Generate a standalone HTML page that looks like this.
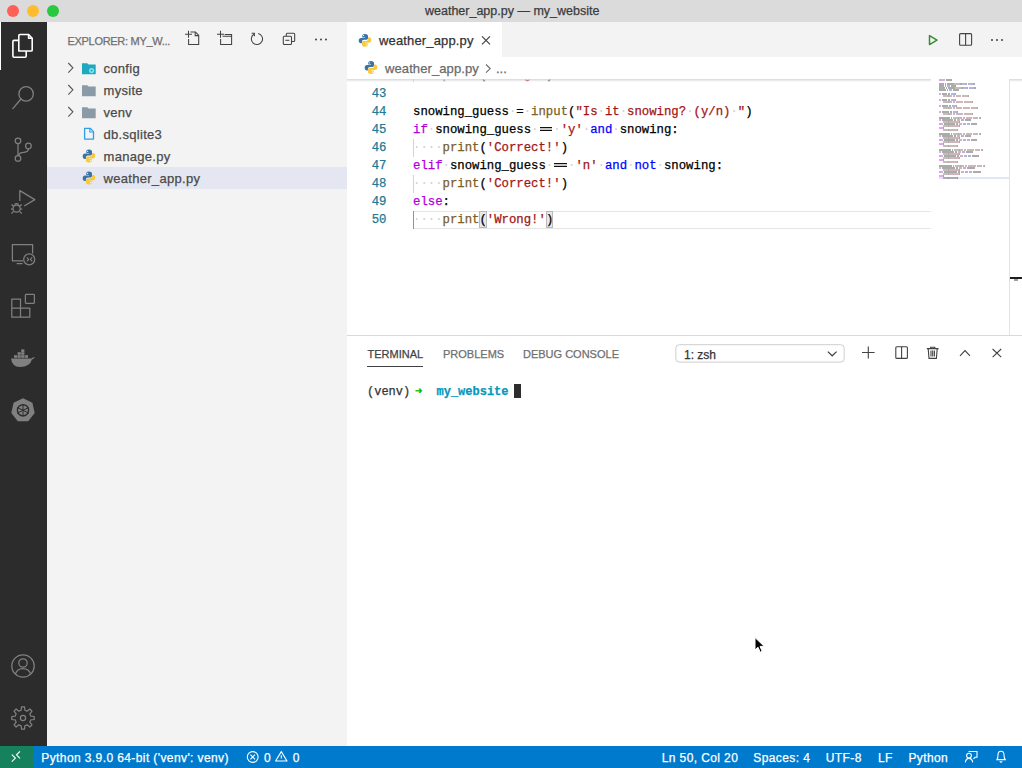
<!DOCTYPE html><html><head><meta charset="utf-8"><style>
*{margin:0;padding:0;box-sizing:border-box}
html,body{width:1022px;height:768px;overflow:hidden;background:#fff;font-family:"Liberation Sans",sans-serif}
.t,.tree,.sb,.code,.ln{-webkit-text-stroke:0.25px currentColor}
.a{position:absolute}
.t{position:absolute;white-space:pre;line-height:1}
.dot{position:absolute;top:5px;width:12px;height:12px;border-radius:50%}
.code{position:absolute;left:413px;font-family:"Liberation Mono",monospace;font-size:12.3px;line-height:18px;height:18px;white-space:pre;color:#000}
.ln{position:absolute;left:347px;width:39.5px;text-align:right;font-family:"Liberation Mono",monospace;font-size:12.3px;line-height:18px;height:18px;color:#237893}
.kw{color:#af00db}.op{color:#0000ff}.st{color:#a31515}.fn{color:#795e26}.ws{color:#d0d0d0;-webkit-text-stroke:0}
.tree{position:absolute;left:103.5px;font-size:13px;letter-spacing:0.3px;color:#4a4a4a;white-space:pre;line-height:1}
.sb{position:absolute;top:751.5px;font-size:12px;letter-spacing:0.4px;color:#fff;white-space:pre;line-height:1}
.mono{font-family:"Liberation Mono",monospace}
</style></head><body>
<div class="a" style="left:0;top:0;width:1022px;height:22px;background:#dbdbdb"></div>
<div class="dot" style="left:7px;background:#fe5f57"></div>
<div class="dot" style="left:27px;background:#febc2e"></div>
<div class="dot" style="left:47px;background:#28c840"></div>
<div class="t" style="left:425px;top:5px;font-size:12.5px;color:#3b3b3b">weather_app.py — my_website</div>
<div class="a" style="left:0;top:22px;width:47px;height:724px;background:#2c2c2c"></div>
<div class="a" style="left:0;top:22px;width:1px;height:48px;background:#fff"></div>
<div class="a" style="left:47px;top:22px;width:300px;height:724px;background:#f3f3f3"></div>
<div class="t" style="left:67.5px;top:36px;font-size:11px;letter-spacing:-0.3px;color:#6f6f6f">EXPLORER: MY_W...</div>
<div class="a" style="left:47px;top:167px;width:300px;height:22px;background:#e4e6f1"></div>
<div class="tree" style="top:61.5px">config</div>
<div class="tree" style="top:83.5px">mysite</div>
<div class="tree" style="top:105.5px">venv</div>
<div class="tree" style="top:127.5px">db.sqlite3</div>
<div class="tree" style="top:149.5px">manage.py</div>
<div class="tree" style="top:171.5px">weather_app.py</div>
<div class="a" style="left:347px;top:22px;width:675px;height:35px;background:#f3f3f3"></div>
<div class="a" style="left:347px;top:22px;width:155px;height:35px;background:#fff"></div>
<div class="t" style="left:379px;top:34px;font-size:13px;letter-spacing:0.15px;color:#333">weather_app.py</div>
<div class="a" style="left:347px;top:57px;width:675px;height:278px;background:#fff"></div>
<div class="t" style="left:385px;top:61.5px;font-size:13px;letter-spacing:0.1px;color:#6a6a6a">weather_app.py</div>
<div class="t" style="left:496px;top:61.5px;font-size:13px;color:#6a6a6a">...</div>
<div class="a" style="left:413px;top:138.6px;width:1px;height:18px;background:#d3d3d3"></div>
<div class="a" style="left:413px;top:174.6px;width:1px;height:18px;background:#d3d3d3"></div>
<div class="a" style="left:413px;top:211px;width:518px;height:17.6px;border-top:1px solid #e6e6e6;border-bottom:1px solid #e6e6e6"></div>
<div class="a" style="left:413px;top:210.6px;width:1px;height:18px;background:#939393"></div>
<div class="a" style="left:479.2px;top:210.8px;width:7.4px;height:17.6px;background:#e8e8e8;border:1px solid #b9b9b9"></div>
<div class="a" style="left:545.6px;top:210.8px;width:7.4px;height:17.6px;background:#e8e8e8;border:1px solid #b9b9b9"></div>
<div class="ln" style="top:84.6px">43</div>
<div class="ln" style="top:102.6px">44</div>
<div class="ln" style="top:120.6px">45</div>
<div class="ln" style="top:138.6px">46</div>
<div class="ln" style="top:156.6px">47</div>
<div class="ln" style="top:174.6px">48</div>
<div class="ln" style="top:192.6px">49</div>
<div class="ln" style="top:210.6px">50</div>
<div class="code" style="top:102.6px">snowing_guess<span class="ws">·</span>=<span class="ws">·</span><span class="fn">input</span>(<span class="st">"Is<span class="ws">·</span>it<span class="ws">·</span>snowing?<span class="ws">·</span>(y/n)<span class="ws">·</span>"</span>)</div>
<div class="code" style="top:120.6px"><span class="kw">if</span><span class="ws">·</span>snowing_guess<span class="ws">·</span><span style="display:inline-block;position:relative;width:14.76px;height:18px;vertical-align:top"><i style="position:absolute;left:1.2px;width:12.8px;top:6.3px;height:4.1px;border-top:1.2px solid #111;border-bottom:1.2px solid #111;background:#c8c8c8"></i></span><span class="ws">·</span><span class="st">'y'</span><span class="ws">·</span><span class="op">and</span><span class="ws">·</span>snowing:</div>
<div class="code" style="top:138.6px"><span class="ws">····</span><span class="fn">print</span>(<span class="st">'Correct!'</span>)</div>
<div class="code" style="top:156.6px"><span class="kw">elif</span><span class="ws">·</span>snowing_guess<span class="ws">·</span><span style="display:inline-block;position:relative;width:14.76px;height:18px;vertical-align:top"><i style="position:absolute;left:1.2px;width:12.8px;top:6.3px;height:4.1px;border-top:1.2px solid #111;border-bottom:1.2px solid #111;background:#c8c8c8"></i></span><span class="ws">·</span><span class="st">'n'</span><span class="ws">·</span><span class="op">and</span><span class="ws">·</span><span class="op">not</span><span class="ws">·</span>snowing:</div>
<div class="code" style="top:174.6px"><span class="ws">····</span><span class="fn">print</span>(<span class="st">'Correct!'</span>)</div>
<div class="code" style="top:192.6px"><span class="kw">else</span>:</div>
<div class="code" style="top:210.6px"><span class="ws">····</span><span class="fn">print</span>(<span class="st">'Wrong!'</span>)</div>
<div class="a" style="left:347px;top:79px;width:662px;height:4px;overflow:hidden"><div class="code" style="left:66px;top:-13.2px"><span class="ws">····</span><span class="fn">print</span>(<span class="st">'Wrong!'</span>)</div><div class="a" style="left:66px;top:0;width:1px;height:3px;background:#d3d3d3"></div></div>
<div class="a" style="left:347px;top:79px;width:584px;height:3px;background:linear-gradient(#d8d8d8,rgba(221,221,221,0))"></div>
<div class="a" style="left:1009px;top:79px;width:13px;height:3px;background:linear-gradient(#d8d8d8,rgba(221,221,221,0))"></div>
<div class="a" style="left:1009px;top:79px;width:1px;height:256px;background:#e3e3e3"></div>
<div class="a" style="left:1010px;top:276.5px;width:12px;height:2px;background:#1e1e1e"></div>
<div class="a" style="left:1014px;top:279px;width:4px;height:2px;background:#a0a0a0"></div>
<svg class="a" style="left:0;top:0" width="1022" height="768" viewBox="0 0 1022 768"><rect x="939" y="177" width="70" height="2" fill="#dde8f4"/><rect x="939" y="79" width="6" height="2" fill="#8a00b0" fill-opacity="0.33"/><rect x="946" y="79" width="6" height="2" fill="#000000" fill-opacity="0.33"/><rect x="939" y="83" width="5" height="2" fill="#000000" fill-opacity="0.33"/><rect x="945" y="83" width="1" height="2" fill="#000000" fill-opacity="0.33"/><rect x="947" y="83" width="6" height="2" fill="#000000" fill-opacity="0.33"/><rect x="953" y="83" width="1" height="2" fill="#000000" fill-opacity="0.33"/><rect x="954" y="83" width="6" height="2" fill="#4a3a20" fill-opacity="0.33"/><rect x="960" y="83" width="2" height="2" fill="#000000" fill-opacity="0.33"/><rect x="962" y="83" width="4" height="2" fill="#1a1aa0" fill-opacity="0.33"/><rect x="966" y="83" width="1" height="2" fill="#000000" fill-opacity="0.33"/><rect x="968" y="83" width="5" height="2" fill="#1a1aa0" fill-opacity="0.33"/><rect x="973" y="83" width="2" height="2" fill="#000000" fill-opacity="0.33"/><rect x="939" y="85" width="5" height="2" fill="#000000" fill-opacity="0.33"/><rect x="945" y="85" width="1" height="2" fill="#000000" fill-opacity="0.33"/><rect x="947" y="85" width="3" height="2" fill="#1a1aa0" fill-opacity="0.33"/><rect x="951" y="85" width="5" height="2" fill="#000000" fill-opacity="0.33"/><rect x="939" y="87" width="6" height="2" fill="#000000" fill-opacity="0.33"/><rect x="946" y="87" width="1" height="2" fill="#000000" fill-opacity="0.33"/><rect x="948" y="87" width="6" height="2" fill="#000000" fill-opacity="0.33"/><rect x="954" y="87" width="1" height="2" fill="#000000" fill-opacity="0.33"/><rect x="955" y="87" width="6" height="2" fill="#4a3a20" fill-opacity="0.33"/><rect x="961" y="87" width="2" height="2" fill="#000000" fill-opacity="0.33"/><rect x="963" y="87" width="4" height="2" fill="#1a1aa0" fill-opacity="0.33"/><rect x="967" y="87" width="1" height="2" fill="#000000" fill-opacity="0.33"/><rect x="969" y="87" width="5" height="2" fill="#1a1aa0" fill-opacity="0.33"/><rect x="974" y="87" width="2" height="2" fill="#000000" fill-opacity="0.33"/><rect x="939" y="89" width="7" height="2" fill="#000000" fill-opacity="0.33"/><rect x="947" y="89" width="1" height="2" fill="#000000" fill-opacity="0.33"/><rect x="949" y="89" width="3" height="2" fill="#1a1aa0" fill-opacity="0.33"/><rect x="953" y="89" width="6" height="2" fill="#000000" fill-opacity="0.33"/><rect x="939" y="93" width="2" height="2" fill="#8a00b0" fill-opacity="0.33"/><rect x="942" y="93" width="5" height="2" fill="#000000" fill-opacity="0.33"/><rect x="948" y="93" width="2" height="2" fill="#000000" fill-opacity="0.33"/><rect x="951" y="93" width="4" height="2" fill="#1a1aa0" fill-opacity="0.33"/><rect x="955" y="93" width="1" height="2" fill="#000000" fill-opacity="0.33"/><rect x="943" y="95" width="5" height="2" fill="#4a3a20" fill-opacity="0.33"/><rect x="948" y="95" width="1" height="2" fill="#000000" fill-opacity="0.33"/><rect x="949" y="95" width="3" height="2" fill="#6a2030" fill-opacity="0.33"/><rect x="953" y="95" width="2" height="2" fill="#6a2030" fill-opacity="0.33"/><rect x="956" y="95" width="5" height="2" fill="#6a2030" fill-opacity="0.33"/><rect x="962" y="95" width="6" height="2" fill="#6a2030" fill-opacity="0.33"/><rect x="968" y="95" width="1" height="2" fill="#000000" fill-opacity="0.33"/><rect x="939" y="99" width="2" height="2" fill="#8a00b0" fill-opacity="0.33"/><rect x="942" y="99" width="5" height="2" fill="#000000" fill-opacity="0.33"/><rect x="948" y="99" width="2" height="2" fill="#000000" fill-opacity="0.33"/><rect x="951" y="99" width="4" height="2" fill="#1a1aa0" fill-opacity="0.33"/><rect x="955" y="99" width="1" height="2" fill="#000000" fill-opacity="0.33"/><rect x="943" y="101" width="5" height="2" fill="#4a3a20" fill-opacity="0.33"/><rect x="948" y="101" width="1" height="2" fill="#000000" fill-opacity="0.33"/><rect x="949" y="101" width="3" height="2" fill="#6a2030" fill-opacity="0.33"/><rect x="953" y="101" width="2" height="2" fill="#6a2030" fill-opacity="0.33"/><rect x="956" y="101" width="7" height="2" fill="#6a2030" fill-opacity="0.33"/><rect x="964" y="101" width="8" height="2" fill="#6a2030" fill-opacity="0.33"/><rect x="972" y="101" width="1" height="2" fill="#000000" fill-opacity="0.33"/><rect x="939" y="105" width="2" height="2" fill="#8a00b0" fill-opacity="0.33"/><rect x="942" y="105" width="6" height="2" fill="#000000" fill-opacity="0.33"/><rect x="949" y="105" width="2" height="2" fill="#000000" fill-opacity="0.33"/><rect x="952" y="105" width="4" height="2" fill="#1a1aa0" fill-opacity="0.33"/><rect x="956" y="105" width="1" height="2" fill="#000000" fill-opacity="0.33"/><rect x="943" y="107" width="5" height="2" fill="#4a3a20" fill-opacity="0.33"/><rect x="948" y="107" width="1" height="2" fill="#000000" fill-opacity="0.33"/><rect x="949" y="107" width="3" height="2" fill="#6a2030" fill-opacity="0.33"/><rect x="953" y="107" width="2" height="2" fill="#6a2030" fill-opacity="0.33"/><rect x="956" y="107" width="6" height="2" fill="#6a2030" fill-opacity="0.33"/><rect x="963" y="107" width="7" height="2" fill="#6a2030" fill-opacity="0.33"/><rect x="971" y="107" width="6" height="2" fill="#6a2030" fill-opacity="0.33"/><rect x="977" y="107" width="1" height="2" fill="#000000" fill-opacity="0.33"/><rect x="939" y="111" width="2" height="2" fill="#8a00b0" fill-opacity="0.33"/><rect x="942" y="111" width="7" height="2" fill="#000000" fill-opacity="0.33"/><rect x="950" y="111" width="2" height="2" fill="#000000" fill-opacity="0.33"/><rect x="953" y="111" width="4" height="2" fill="#1a1aa0" fill-opacity="0.33"/><rect x="957" y="111" width="1" height="2" fill="#000000" fill-opacity="0.33"/><rect x="943" y="113" width="5" height="2" fill="#4a3a20" fill-opacity="0.33"/><rect x="948" y="113" width="1" height="2" fill="#000000" fill-opacity="0.33"/><rect x="949" y="113" width="3" height="2" fill="#6a2030" fill-opacity="0.33"/><rect x="953" y="113" width="2" height="2" fill="#6a2030" fill-opacity="0.33"/><rect x="956" y="113" width="7" height="2" fill="#6a2030" fill-opacity="0.33"/><rect x="964" y="113" width="8" height="2" fill="#6a2030" fill-opacity="0.33"/><rect x="972" y="113" width="1" height="2" fill="#000000" fill-opacity="0.33"/><rect x="939" y="117" width="11" height="2" fill="#000000" fill-opacity="0.33"/><rect x="951" y="117" width="1" height="2" fill="#000000" fill-opacity="0.33"/><rect x="953" y="117" width="5" height="2" fill="#4a3a20" fill-opacity="0.33"/><rect x="958" y="117" width="1" height="2" fill="#000000" fill-opacity="0.33"/><rect x="959" y="117" width="3" height="2" fill="#6a2030" fill-opacity="0.33"/><rect x="963" y="117" width="2" height="2" fill="#6a2030" fill-opacity="0.33"/><rect x="966" y="117" width="6" height="2" fill="#6a2030" fill-opacity="0.33"/><rect x="973" y="117" width="5" height="2" fill="#6a2030" fill-opacity="0.33"/><rect x="979" y="117" width="1" height="2" fill="#6a2030" fill-opacity="0.33"/><rect x="980" y="117" width="1" height="2" fill="#000000" fill-opacity="0.33"/><rect x="939" y="119" width="2" height="2" fill="#8a00b0" fill-opacity="0.33"/><rect x="942" y="119" width="11" height="2" fill="#000000" fill-opacity="0.33"/><rect x="954" y="119" width="2" height="2" fill="#000000" fill-opacity="0.33"/><rect x="957" y="119" width="3" height="2" fill="#6a2030" fill-opacity="0.33"/><rect x="961" y="119" width="3" height="2" fill="#1a1aa0" fill-opacity="0.33"/><rect x="965" y="119" width="6" height="2" fill="#000000" fill-opacity="0.33"/><rect x="943" y="121" width="5" height="2" fill="#4a3a20" fill-opacity="0.33"/><rect x="948" y="121" width="1" height="2" fill="#000000" fill-opacity="0.33"/><rect x="949" y="121" width="10" height="2" fill="#6a2030" fill-opacity="0.33"/><rect x="959" y="121" width="1" height="2" fill="#000000" fill-opacity="0.33"/><rect x="939" y="123" width="4" height="2" fill="#8a00b0" fill-opacity="0.33"/><rect x="944" y="123" width="11" height="2" fill="#000000" fill-opacity="0.33"/><rect x="956" y="123" width="2" height="2" fill="#000000" fill-opacity="0.33"/><rect x="959" y="123" width="3" height="2" fill="#6a2030" fill-opacity="0.33"/><rect x="963" y="123" width="3" height="2" fill="#1a1aa0" fill-opacity="0.33"/><rect x="967" y="123" width="3" height="2" fill="#1a1aa0" fill-opacity="0.33"/><rect x="971" y="123" width="6" height="2" fill="#000000" fill-opacity="0.33"/><rect x="943" y="125" width="5" height="2" fill="#4a3a20" fill-opacity="0.33"/><rect x="948" y="125" width="1" height="2" fill="#000000" fill-opacity="0.33"/><rect x="949" y="125" width="10" height="2" fill="#6a2030" fill-opacity="0.33"/><rect x="959" y="125" width="1" height="2" fill="#000000" fill-opacity="0.33"/><rect x="939" y="127" width="4" height="2" fill="#8a00b0" fill-opacity="0.33"/><rect x="943" y="127" width="1" height="2" fill="#000000" fill-opacity="0.33"/><rect x="943" y="129" width="5" height="2" fill="#4a3a20" fill-opacity="0.33"/><rect x="948" y="129" width="1" height="2" fill="#000000" fill-opacity="0.33"/><rect x="949" y="129" width="8" height="2" fill="#6a2030" fill-opacity="0.33"/><rect x="957" y="129" width="1" height="2" fill="#000000" fill-opacity="0.33"/><rect x="939" y="133" width="11" height="2" fill="#000000" fill-opacity="0.33"/><rect x="951" y="133" width="1" height="2" fill="#000000" fill-opacity="0.33"/><rect x="953" y="133" width="5" height="2" fill="#4a3a20" fill-opacity="0.33"/><rect x="958" y="133" width="1" height="2" fill="#000000" fill-opacity="0.33"/><rect x="959" y="133" width="3" height="2" fill="#6a2030" fill-opacity="0.33"/><rect x="963" y="133" width="2" height="2" fill="#6a2030" fill-opacity="0.33"/><rect x="966" y="133" width="6" height="2" fill="#6a2030" fill-opacity="0.33"/><rect x="973" y="133" width="5" height="2" fill="#6a2030" fill-opacity="0.33"/><rect x="979" y="133" width="1" height="2" fill="#6a2030" fill-opacity="0.33"/><rect x="980" y="133" width="1" height="2" fill="#000000" fill-opacity="0.33"/><rect x="939" y="135" width="2" height="2" fill="#8a00b0" fill-opacity="0.33"/><rect x="942" y="135" width="11" height="2" fill="#000000" fill-opacity="0.33"/><rect x="954" y="135" width="2" height="2" fill="#000000" fill-opacity="0.33"/><rect x="957" y="135" width="3" height="2" fill="#6a2030" fill-opacity="0.33"/><rect x="961" y="135" width="3" height="2" fill="#1a1aa0" fill-opacity="0.33"/><rect x="965" y="135" width="6" height="2" fill="#000000" fill-opacity="0.33"/><rect x="943" y="137" width="5" height="2" fill="#4a3a20" fill-opacity="0.33"/><rect x="948" y="137" width="1" height="2" fill="#000000" fill-opacity="0.33"/><rect x="949" y="137" width="10" height="2" fill="#6a2030" fill-opacity="0.33"/><rect x="959" y="137" width="1" height="2" fill="#000000" fill-opacity="0.33"/><rect x="939" y="139" width="4" height="2" fill="#8a00b0" fill-opacity="0.33"/><rect x="944" y="139" width="11" height="2" fill="#000000" fill-opacity="0.33"/><rect x="956" y="139" width="2" height="2" fill="#000000" fill-opacity="0.33"/><rect x="959" y="139" width="3" height="2" fill="#6a2030" fill-opacity="0.33"/><rect x="963" y="139" width="3" height="2" fill="#1a1aa0" fill-opacity="0.33"/><rect x="967" y="139" width="3" height="2" fill="#1a1aa0" fill-opacity="0.33"/><rect x="971" y="139" width="6" height="2" fill="#000000" fill-opacity="0.33"/><rect x="943" y="141" width="5" height="2" fill="#4a3a20" fill-opacity="0.33"/><rect x="948" y="141" width="1" height="2" fill="#000000" fill-opacity="0.33"/><rect x="949" y="141" width="10" height="2" fill="#6a2030" fill-opacity="0.33"/><rect x="959" y="141" width="1" height="2" fill="#000000" fill-opacity="0.33"/><rect x="939" y="143" width="4" height="2" fill="#8a00b0" fill-opacity="0.33"/><rect x="943" y="143" width="1" height="2" fill="#000000" fill-opacity="0.33"/><rect x="943" y="145" width="5" height="2" fill="#4a3a20" fill-opacity="0.33"/><rect x="948" y="145" width="1" height="2" fill="#000000" fill-opacity="0.33"/><rect x="949" y="145" width="8" height="2" fill="#6a2030" fill-opacity="0.33"/><rect x="957" y="145" width="1" height="2" fill="#000000" fill-opacity="0.33"/><rect x="939" y="149" width="12" height="2" fill="#000000" fill-opacity="0.33"/><rect x="952" y="149" width="1" height="2" fill="#000000" fill-opacity="0.33"/><rect x="954" y="149" width="5" height="2" fill="#4a3a20" fill-opacity="0.33"/><rect x="959" y="149" width="1" height="2" fill="#000000" fill-opacity="0.33"/><rect x="960" y="149" width="3" height="2" fill="#6a2030" fill-opacity="0.33"/><rect x="964" y="149" width="2" height="2" fill="#6a2030" fill-opacity="0.33"/><rect x="967" y="149" width="7" height="2" fill="#6a2030" fill-opacity="0.33"/><rect x="975" y="149" width="5" height="2" fill="#6a2030" fill-opacity="0.33"/><rect x="981" y="149" width="1" height="2" fill="#6a2030" fill-opacity="0.33"/><rect x="982" y="149" width="1" height="2" fill="#000000" fill-opacity="0.33"/><rect x="939" y="151" width="2" height="2" fill="#8a00b0" fill-opacity="0.33"/><rect x="942" y="151" width="12" height="2" fill="#000000" fill-opacity="0.33"/><rect x="955" y="151" width="2" height="2" fill="#000000" fill-opacity="0.33"/><rect x="958" y="151" width="3" height="2" fill="#6a2030" fill-opacity="0.33"/><rect x="962" y="151" width="3" height="2" fill="#1a1aa0" fill-opacity="0.33"/><rect x="966" y="151" width="7" height="2" fill="#000000" fill-opacity="0.33"/><rect x="943" y="153" width="5" height="2" fill="#4a3a20" fill-opacity="0.33"/><rect x="948" y="153" width="1" height="2" fill="#000000" fill-opacity="0.33"/><rect x="949" y="153" width="10" height="2" fill="#6a2030" fill-opacity="0.33"/><rect x="959" y="153" width="1" height="2" fill="#000000" fill-opacity="0.33"/><rect x="939" y="155" width="4" height="2" fill="#8a00b0" fill-opacity="0.33"/><rect x="944" y="155" width="12" height="2" fill="#000000" fill-opacity="0.33"/><rect x="957" y="155" width="2" height="2" fill="#000000" fill-opacity="0.33"/><rect x="960" y="155" width="3" height="2" fill="#6a2030" fill-opacity="0.33"/><rect x="964" y="155" width="3" height="2" fill="#1a1aa0" fill-opacity="0.33"/><rect x="968" y="155" width="3" height="2" fill="#1a1aa0" fill-opacity="0.33"/><rect x="972" y="155" width="7" height="2" fill="#000000" fill-opacity="0.33"/><rect x="943" y="157" width="5" height="2" fill="#4a3a20" fill-opacity="0.33"/><rect x="948" y="157" width="1" height="2" fill="#000000" fill-opacity="0.33"/><rect x="949" y="157" width="10" height="2" fill="#6a2030" fill-opacity="0.33"/><rect x="959" y="157" width="1" height="2" fill="#000000" fill-opacity="0.33"/><rect x="939" y="159" width="4" height="2" fill="#8a00b0" fill-opacity="0.33"/><rect x="943" y="159" width="1" height="2" fill="#000000" fill-opacity="0.33"/><rect x="943" y="161" width="5" height="2" fill="#4a3a20" fill-opacity="0.33"/><rect x="948" y="161" width="1" height="2" fill="#000000" fill-opacity="0.33"/><rect x="949" y="161" width="8" height="2" fill="#6a2030" fill-opacity="0.33"/><rect x="957" y="161" width="1" height="2" fill="#000000" fill-opacity="0.33"/><rect x="939" y="165" width="13" height="2" fill="#000000" fill-opacity="0.33"/><rect x="953" y="165" width="1" height="2" fill="#000000" fill-opacity="0.33"/><rect x="955" y="165" width="5" height="2" fill="#4a3a20" fill-opacity="0.33"/><rect x="960" y="165" width="1" height="2" fill="#000000" fill-opacity="0.33"/><rect x="961" y="165" width="3" height="2" fill="#6a2030" fill-opacity="0.33"/><rect x="965" y="165" width="2" height="2" fill="#6a2030" fill-opacity="0.33"/><rect x="968" y="165" width="8" height="2" fill="#6a2030" fill-opacity="0.33"/><rect x="977" y="165" width="5" height="2" fill="#6a2030" fill-opacity="0.33"/><rect x="983" y="165" width="1" height="2" fill="#6a2030" fill-opacity="0.33"/><rect x="984" y="165" width="1" height="2" fill="#000000" fill-opacity="0.33"/><rect x="939" y="167" width="2" height="2" fill="#8a00b0" fill-opacity="0.33"/><rect x="942" y="167" width="13" height="2" fill="#000000" fill-opacity="0.33"/><rect x="956" y="167" width="2" height="2" fill="#000000" fill-opacity="0.33"/><rect x="959" y="167" width="3" height="2" fill="#6a2030" fill-opacity="0.33"/><rect x="963" y="167" width="3" height="2" fill="#1a1aa0" fill-opacity="0.33"/><rect x="967" y="167" width="8" height="2" fill="#000000" fill-opacity="0.33"/><rect x="943" y="169" width="5" height="2" fill="#4a3a20" fill-opacity="0.33"/><rect x="948" y="169" width="1" height="2" fill="#000000" fill-opacity="0.33"/><rect x="949" y="169" width="10" height="2" fill="#6a2030" fill-opacity="0.33"/><rect x="959" y="169" width="1" height="2" fill="#000000" fill-opacity="0.33"/><rect x="939" y="171" width="4" height="2" fill="#8a00b0" fill-opacity="0.33"/><rect x="944" y="171" width="13" height="2" fill="#000000" fill-opacity="0.33"/><rect x="958" y="171" width="2" height="2" fill="#000000" fill-opacity="0.33"/><rect x="961" y="171" width="3" height="2" fill="#6a2030" fill-opacity="0.33"/><rect x="965" y="171" width="3" height="2" fill="#1a1aa0" fill-opacity="0.33"/><rect x="969" y="171" width="3" height="2" fill="#1a1aa0" fill-opacity="0.33"/><rect x="973" y="171" width="8" height="2" fill="#000000" fill-opacity="0.33"/><rect x="943" y="173" width="5" height="2" fill="#4a3a20" fill-opacity="0.33"/><rect x="948" y="173" width="1" height="2" fill="#000000" fill-opacity="0.33"/><rect x="949" y="173" width="10" height="2" fill="#6a2030" fill-opacity="0.33"/><rect x="959" y="173" width="1" height="2" fill="#000000" fill-opacity="0.33"/><rect x="939" y="175" width="4" height="2" fill="#8a00b0" fill-opacity="0.33"/><rect x="943" y="175" width="1" height="2" fill="#000000" fill-opacity="0.33"/><rect x="943" y="177" width="5" height="2" fill="#4a3a20" fill-opacity="0.33"/><rect x="948" y="177" width="1" height="2" fill="#000000" fill-opacity="0.33"/><rect x="949" y="177" width="8" height="2" fill="#6a2030" fill-opacity="0.33"/><rect x="957" y="177" width="1" height="2" fill="#000000" fill-opacity="0.33"/></svg>
<div class="a" style="left:347px;top:335px;width:675px;height:411px;background:#fff;border-top:1px solid #d9d9d9"></div>
<div class="t" style="left:367.5px;top:349px;font-size:11px;color:#424242">TERMINAL</div>
<div class="a" style="left:367px;top:366px;width:56px;height:1px;background:#424242"></div>
<div class="t" style="left:443px;top:349px;font-size:11px;color:#6f6f6f">PROBLEMS</div>
<div class="t" style="left:523px;top:349px;font-size:11px;color:#6f6f6f">DEBUG CONSOLE</div>
<div class="t" style="left:684px;top:349px;font-size:12px;color:#333">1: zsh</div>
<div class="t mono" style="left:367px;top:386px;font-size:12px;color:#333">(venv)</div>
<div class="t mono" style="left:415px;top:386px;font-size:12px;font-weight:bold;color:#00bc00">&#x279C;</div>
<div class="t mono" style="left:436.5px;top:386px;font-size:12px;font-weight:bold;color:#0598bc">my_website</div>
<div class="a" style="left:514px;top:384px;width:7px;height:14px;background:#2d2d2d"></div>
<div class="a" style="left:0;top:746px;width:1022px;height:22px;background:#007acc"></div>
<div class="a" style="left:0;top:746px;width:33px;height:22px;background:#16825d"></div>
<div class="sb" style="left:41.3px">Python 3.9.0 64-bit ('venv': venv)</div>
<div class="sb" style="left:264.0px">0</div>
<div class="sb" style="left:292.7px">0</div>
<div class="sb" style="left:661.7px">Ln 50, Col 20</div>
<div class="sb" style="left:753.3px">Spaces: 4</div>
<div class="sb" style="left:825.8px">UTF-8</div>
<div class="sb" style="left:878.0px">LF</div>
<div class="sb" style="left:908.4px">Python</div>
<svg class="a" style="left:0;top:0" width="1022" height="768" viewBox="0 0 1022 768"><g fill="none" stroke="#fff" stroke-width="1.6" stroke-linejoin="round"><path d="M18.8 51V35.6Q18.8 34.5 19.9 34.5H28.6L32.2 38.2V49.9Q32.2 51 31.1 51Z"/><path d="M28.6 34.5V38.2H32.2"/><path d="M18.8 40.4H14Q12.9 40.4 12.9 41.5V56.1Q12.9 57.2 14 57.2H25.1Q26.2 57.2 26.2 56.1V51"/></g><g fill="none" stroke="#808080" stroke-width="1.3"><circle cx="26.1" cy="93.9" r="7.2"/><path d="M21 99L12.8 108.6" stroke-linecap="round"/></g><g fill="none" stroke="#808080" stroke-width="1.25"><circle cx="18" cy="140.8" r="2.8"/><circle cx="18" cy="158.4" r="2.8"/><circle cx="28.4" cy="146" r="2.8"/><path d="M18 143.6V155.6"/><path d="M28.4 148.8Q28.4 152 24 152.3Q19 152.6 18.5 155.6"/></g><g fill="none" stroke="#808080" stroke-width="1.25" stroke-linejoin="round"><path d="M19.8 201V190.6L34.8 199.6L24.2 206"/><circle cx="16.6" cy="208.6" r="3.6"/><path d="M11.5 204.5L13.6 206.3M21.7 204.5L19.6 206.3M11 209H13M22.2 209H20.2M11.5 213.5L13.6 211.4M21.7 213.5L19.6 211.4M14.5 204.5Q16.6 202.6 18.7 204.5"/></g><g fill="none" stroke="#808080" stroke-width="1.25" stroke-linejoin="round"><path d="M23 260.8H12.4V244.6H32.6V253.6"/><path d="M16.6 263.6H22.6"/><circle cx="29.2" cy="259.4" r="5.5"/><path d="M26.8 257.4L28.7 259.4L26.8 261.4M32.2 257.4L30.3 259.4L32.2 261.4" stroke-width="1.1"/></g><g fill="none" stroke="#808080" stroke-width="1.25" stroke-linejoin="round"><path d="M11.8 299H20.5V317.2H11.8Z"/><path d="M11.8 308.2H29.8V317.2H20.5"/><rect x="25.4" y="294.4" width="9" height="9" rx="0.8"/></g><g fill="#808080"><path d="M11 358.5H31.6Q33 357 34.8 357.3Q34 359 32 359.4Q30 366.5 20 367Q12 367 11 358.5Z"/><rect x="14" y="355.2" width="3.2" height="2.6"/><rect x="17.6" y="355.2" width="3.2" height="2.6"/><rect x="21.2" y="355.2" width="3.2" height="2.6"/><rect x="24.8" y="355.2" width="3.2" height="2.6"/><rect x="17.6" y="352.2" width="3.2" height="2.6"/><rect x="21.2" y="352.2" width="3.2" height="2.6"/><rect x="21.2" y="349.4" width="3.2" height="2.6"/></g><g><path d="M23 398.2L32.4 402.8L34.7 413L28.2 421.2H17.8L11.3 413L13.6 402.8Z" fill="#808080"/><circle cx="23" cy="410.3" r="5.6" fill="none" stroke="#2c2c2c" stroke-width="1.4"/><path d="M23 404V416.6M17.3 407.5L28.7 413.1M28.7 407.5L17.3 413.1" stroke="#2c2c2c" stroke-width="1"/></g><g fill="none" stroke="#808080" stroke-width="1.25"><circle cx="23" cy="666" r="11.2"/><circle cx="23" cy="663" r="4.2"/><path d="M15.3 674.3Q17 668.6 23 668.6Q29 668.6 30.7 674.3"/></g><g fill="none" stroke="#808080" stroke-width="1.25" stroke-linejoin="round"><path d="M21.50 706.80L24.50 706.80L24.87 710.22L27.18 711.18L29.86 709.02L31.98 711.14L29.82 713.82L30.78 716.13L34.20 716.50L34.20 719.50L30.78 719.87L29.82 722.18L31.98 724.86L29.86 726.98L27.18 724.82L24.87 725.78L24.50 729.20L21.50 729.20L21.13 725.78L18.82 724.82L16.14 726.98L14.02 724.86L16.18 722.18L15.22 719.87L11.80 719.50L11.80 716.50L15.22 716.13L16.18 713.82L14.02 711.14L16.14 709.02L18.82 711.18L21.13 710.22Z"/><circle cx="23" cy="718" r="2.6"/></g><g fill="none" stroke="#424242" stroke-width="1.05"><path d="M185 34.3H192M188.5 30.8V37.8"/><path d="M188.6 39V44.5H198.7V35.2L195.4 32H190.5"/><path d="M195.2 32.2V35.6H198.6"/><path d="M217 34.3H224M220.5 30.8V37.8"/><path d="M220.6 39V44.5H231.6V34.5H224.7M222.5 36.2H231.4"/><path d="M253.8 34.3A5.6 5.6 0 1 0 258.2 33.5" /><path d="M251.6 33.2H254.4V36.2"/><path d="M286.3 36.2V34.3Q286.3 33.3 287.3 33.3H293.7Q294.7 33.3 294.7 34.3V40.4Q294.7 41.4 293.7 41.4H291.5"/><rect x="283.3" y="36.2" width="8.2" height="8.2" rx="1"/><path d="M285.4 40.3H289.4"/></g><g fill="#424242"><circle cx="316" cy="39.6" r="1"/><circle cx="321" cy="39.6" r="1"/><circle cx="326" cy="39.6" r="1"/></g><path d="M68.3 63.0L72.9 67.8L68.3 72.6" fill="none" stroke="#555" stroke-width="1.1"/><path d="M68.3 85.0L72.9 89.8L68.3 94.6" fill="none" stroke="#555" stroke-width="1.1"/><path d="M68.3 107.0L72.9 111.8L68.3 116.6" fill="none" stroke="#555" stroke-width="1.1"/><path d="M82 63.2H87.3L88.6 64.6H95.7V74.2H82Z" fill="#1fa9bf"/><circle cx="91.6" cy="70.6" r="2.6" fill="#7fe3ef"/><circle cx="91.6" cy="70.6" r="1" fill="#1fa9bf"/><path d="M82 85.2H87.3L88.6 86.6H95.7V96.2H82Z" fill="#8a9aa6"/><path d="M82 107.2H87.3L88.6 108.6H95.7V118.2H82Z" fill="#8a9aa6"/><path d="M84.6 128.3H90.2L93.5 131.6V139.1H84.6Z" fill="none" stroke="#2e9ee8" stroke-width="1.3" stroke-linejoin="round"/><path d="M89.8 128.4V132H93.4" fill="none" stroke="#2e9ee8" stroke-width="1.1"/><g transform="translate(82.00 149.00) scale(1.0000)"><path d="M6.9 0.6C4.6 0.6 4.3 1.6 4.3 2.6V4.1H7.1V4.6H3C1.7 4.6 0.7 5.5 0.7 7.3C0.7 9.1 1.6 10 2.8 10H3.9V8.4C3.9 7.3 4.8 6.4 5.9 6.4H8.4C9.3 6.4 10 5.7 10 4.8V2.6C10 1.6 9.2 0.6 6.9 0.6Z" fill="#3a73a6"/><path d="M7.1 13.4C9.4 13.4 9.7 12.4 9.7 11.4V9.9H6.9V9.4H11C12.3 9.4 13.3 8.5 13.3 6.7C13.3 4.9 12.4 4 11.2 4H10.1V5.6C10.1 6.7 9.2 7.6 8.1 7.6H5.6C4.7 7.6 4 8.3 4 9.2V11.4C4 12.4 4.8 13.4 7.1 13.4Z" fill="#f8c93a"/><circle cx="5.6" cy="2.3" r="0.6" fill="#fff"/><circle cx="8.4" cy="11.7" r="0.6" fill="#fff"/></g><g transform="translate(82.00 171.00) scale(1.0000)"><path d="M6.9 0.6C4.6 0.6 4.3 1.6 4.3 2.6V4.1H7.1V4.6H3C1.7 4.6 0.7 5.5 0.7 7.3C0.7 9.1 1.6 10 2.8 10H3.9V8.4C3.9 7.3 4.8 6.4 5.9 6.4H8.4C9.3 6.4 10 5.7 10 4.8V2.6C10 1.6 9.2 0.6 6.9 0.6Z" fill="#3a73a6"/><path d="M7.1 13.4C9.4 13.4 9.7 12.4 9.7 11.4V9.9H6.9V9.4H11C12.3 9.4 13.3 8.5 13.3 6.7C13.3 4.9 12.4 4 11.2 4H10.1V5.6C10.1 6.7 9.2 7.6 8.1 7.6H5.6C4.7 7.6 4 8.3 4 9.2V11.4C4 12.4 4.8 13.4 7.1 13.4Z" fill="#f8c93a"/><circle cx="5.6" cy="2.3" r="0.6" fill="#fff"/><circle cx="8.4" cy="11.7" r="0.6" fill="#fff"/></g><g transform="translate(358.00 33.30) scale(1.0000)"><path d="M6.9 0.6C4.6 0.6 4.3 1.6 4.3 2.6V4.1H7.1V4.6H3C1.7 4.6 0.7 5.5 0.7 7.3C0.7 9.1 1.6 10 2.8 10H3.9V8.4C3.9 7.3 4.8 6.4 5.9 6.4H8.4C9.3 6.4 10 5.7 10 4.8V2.6C10 1.6 9.2 0.6 6.9 0.6Z" fill="#3a73a6"/><path d="M7.1 13.4C9.4 13.4 9.7 12.4 9.7 11.4V9.9H6.9V9.4H11C12.3 9.4 13.3 8.5 13.3 6.7C13.3 4.9 12.4 4 11.2 4H10.1V5.6C10.1 6.7 9.2 7.6 8.1 7.6H5.6C4.7 7.6 4 8.3 4 9.2V11.4C4 12.4 4.8 13.4 7.1 13.4Z" fill="#f8c93a"/><circle cx="5.6" cy="2.3" r="0.6" fill="#fff"/><circle cx="8.4" cy="11.7" r="0.6" fill="#fff"/></g><g transform="translate(364.00 60.50) scale(1.0000)"><path d="M6.9 0.6C4.6 0.6 4.3 1.6 4.3 2.6V4.1H7.1V4.6H3C1.7 4.6 0.7 5.5 0.7 7.3C0.7 9.1 1.6 10 2.8 10H3.9V8.4C3.9 7.3 4.8 6.4 5.9 6.4H8.4C9.3 6.4 10 5.7 10 4.8V2.6C10 1.6 9.2 0.6 6.9 0.6Z" fill="#3a73a6"/><path d="M7.1 13.4C9.4 13.4 9.7 12.4 9.7 11.4V9.9H6.9V9.4H11C12.3 9.4 13.3 8.5 13.3 6.7C13.3 4.9 12.4 4 11.2 4H10.1V5.6C10.1 6.7 9.2 7.6 8.1 7.6H5.6C4.7 7.6 4 8.3 4 9.2V11.4C4 12.4 4.8 13.4 7.1 13.4Z" fill="#f8c93a"/><circle cx="5.6" cy="2.3" r="0.6" fill="#fff"/><circle cx="8.4" cy="11.7" r="0.6" fill="#fff"/></g><path d="M482 36.3L490 44.3M490 36.3L482 44.3" stroke="#424242" stroke-width="1.2"/><path d="M486 64.5L490.2 68.6L486 72.7" fill="none" stroke="#6a6a6a" stroke-width="1.1"/><path d="M929.5 35.6V44.6L937 40.1Z" fill="none" stroke="#388a34" stroke-width="1.5" stroke-linejoin="round"/><g fill="none" stroke="#424242" stroke-width="1.1"><rect x="959.6" y="33.6" width="12" height="11.6" rx="1"/><path d="M965.6 33.6V45.2"/></g><g fill="#424242"><circle cx="992" cy="40" r="1"/><circle cx="997" cy="40" r="1"/><circle cx="1002" cy="40" r="1"/></g><rect x="675.8" y="344.7" width="168.4" height="17.4" rx="3.5" fill="none" stroke="#cecece" stroke-width="1"/><path d="M827.8 351.6L832.2 355.8L836.6 351.6" fill="none" stroke="#424242" stroke-width="1.2"/><g fill="none" stroke="#424242" stroke-width="1.1"><path d="M868.3 346.5V358.6M862 352.5H874.6"/><rect x="895.8" y="346.8" width="11.6" height="11.6" rx="1"/><path d="M901.6 346.8V358.4"/><path d="M926.8 348.6H938.6M930.6 348.6V347.2H934.8V348.6M928.2 348.6L929 358.4H936.4L937.2 348.6M931 350.4V356.6M932.7 350.4V356.6M934.4 350.4V356.6"/><path d="M960 355.8L965 350.6L970 355.8"/><path d="M992.6 349L1001.2 357.2M1001.2 349L992.6 357.2"/></g><g fill="none" stroke="#fff" stroke-width="1.1"><path d="M11.8 754.6L15.4 758.1L11.8 761.6M20 751.3L16.5 754.8L20 758.3"/><circle cx="252.7" cy="757" r="5.4"/><path d="M250.4 754.7L255 759.3M255 754.7L250.4 759.3"/><path d="M281.3 751.6L287 761H275.6Z" stroke-linejoin="round"/><path d="M281.3 755.3V758.4"/><path d="M965.3 762.4Q966 758.4 969 758.4Q972 758.4 972.8 762.4"/><circle cx="969" cy="755.6" r="2.4"/><path d="M968.5 751.5H977V757.3H975L973.5 758.9"/><path d="M997 759.6Q998 758 998 755Q998 751.2 1001 751.2Q1004 751.2 1004 755Q1004 758 1005.2 759.6Z"/><path d="M999.8 761.4Q1001 762.8 1002.2 761.4"/></g></svg>
<svg class="a" style="left:750px;top:634px" width="20" height="22" viewBox="750 634 20 22"><path d="M755 637.5V650L758 647.2L760.2 652.2L762.2 651.3L760 646.4H764.2Z" fill="#000" stroke="#fff" stroke-width="1"/></svg>
</body></html>
